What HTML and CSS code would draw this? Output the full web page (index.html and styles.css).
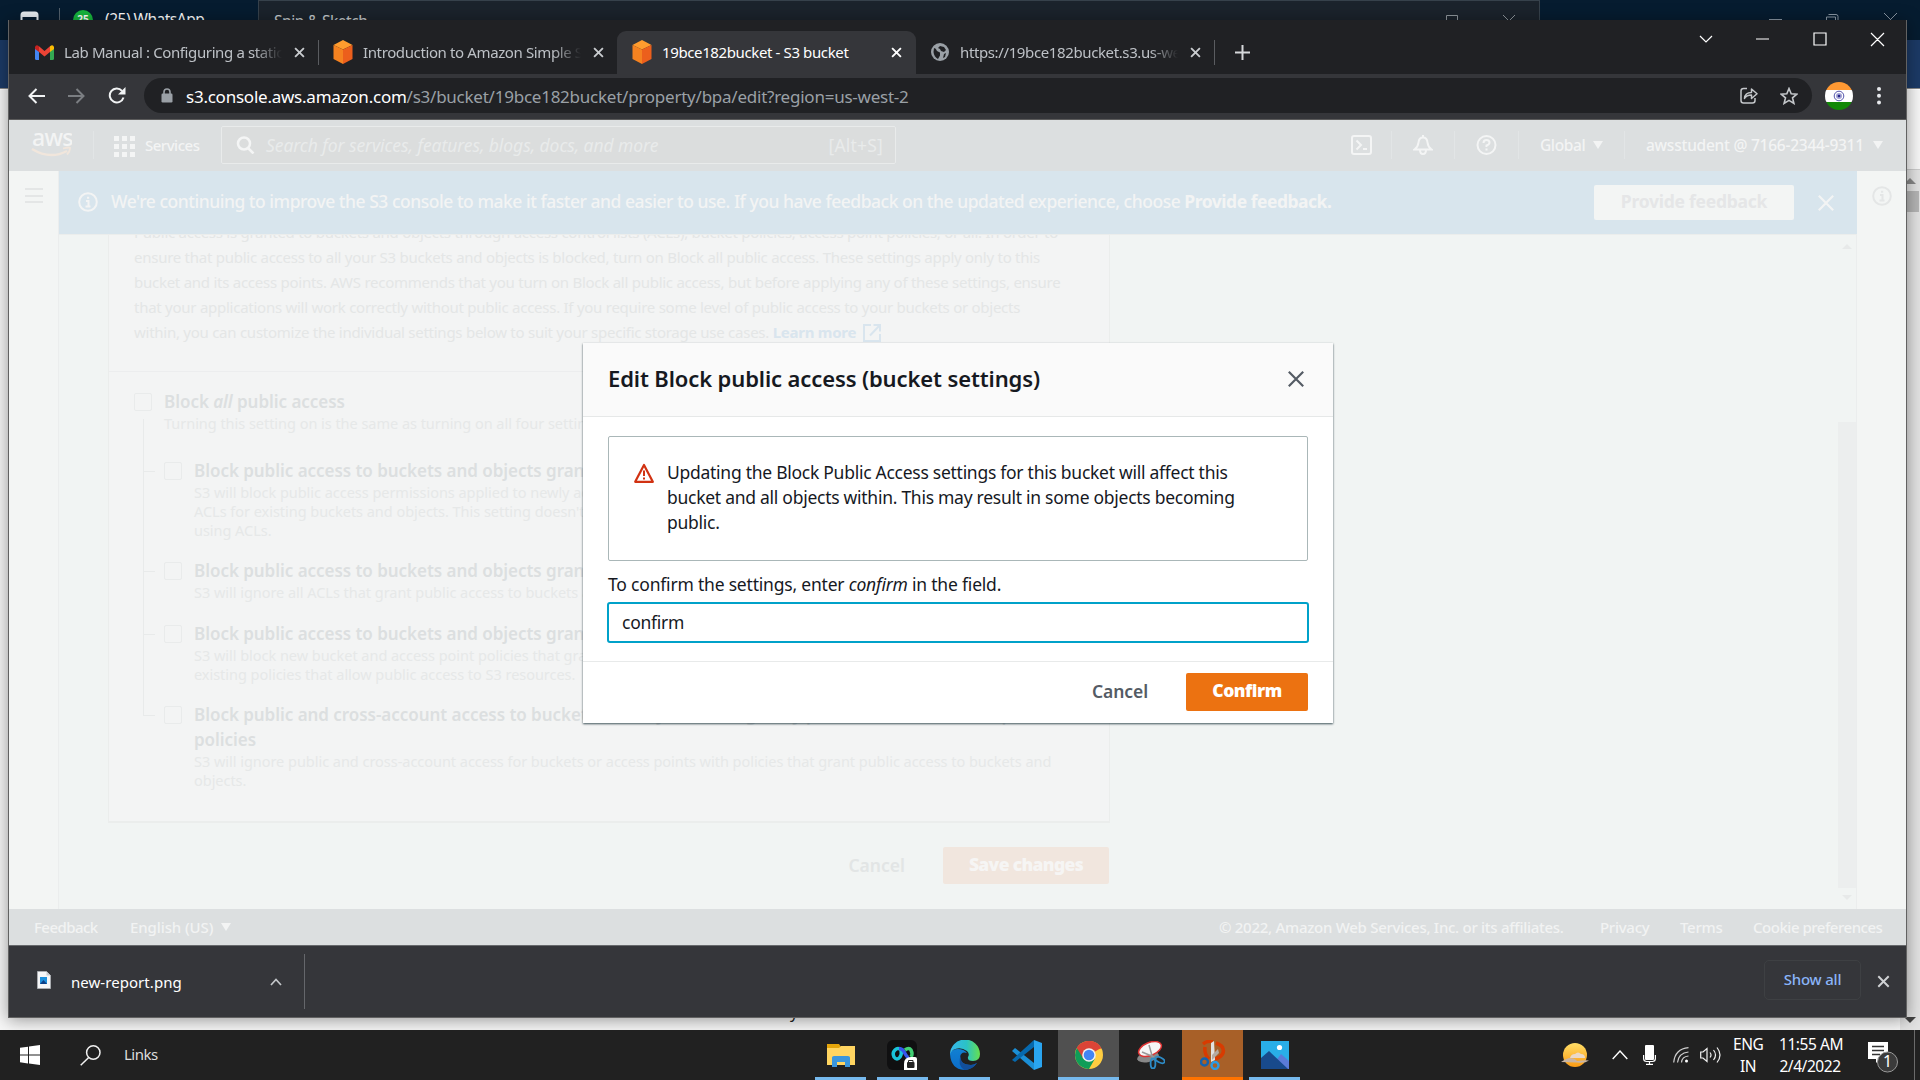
FILE: index.html
```html
<!DOCTYPE html>
<html lang="en">
<head>
<meta charset="utf-8">
<title>19bce182bucket - S3 bucket</title>
<link rel="stylesheet" href="styles.css">
</head>
<body>
<svg width="0" height="0" class="defs">
  <symbol id="x" viewBox="0 0 10 10"><path d="M1 1 9 9M9 1 1 9" fill="none" stroke="currentColor"/></symbol>
  <symbol id="cube" viewBox="0 0 20 24"><path d="M10 0 19.500 5 10 9.500.5 5z" fill="#ff9c2e"/><path d="M.5 5 10 9.500V24L.5 19z" fill="#f58220"/><path d="M19.500 5 10 9.500V24l9.500-5z" fill="#ec5f1c"/></symbol>
  <symbol id="info" viewBox="0 0 20 20"><circle cx="10" cy="10" r="8.800" fill="none" stroke="currentColor" stroke-width="2"/><path d="M8 9h2.500v5M7.500 14.500h5M9 5.800h2.200" fill="none" stroke="currentColor" stroke-width="2"/></symbol>
</svg>

<div class="desktop">
  <div class="edge-window">
    <div class="edge-tabs">
      <svg class="edge-pane" width="19" height="16" viewBox="0 0 19 16"><path d="M1.500 16V4q0-2.500 2.500-2.500h11q2.500 0 2.500 2.500v12" fill="none" stroke="#e8edf2" stroke-width="2"/><path d="M2 2h15v4H2z" fill="#e8edf2"/></svg>
      <i class="edge-sep"></i>
      <span class="wa-badge">25</span>
      <span class="edge-title">(25) WhatsApp</span>
      <svg class="edge-controls" width="130" height="20" viewBox="0 0 130 20" fill="none" stroke="#8b98a5"><path d="M0 19.500h13M57.500 20v-3h9v3M59.500 14.500h7.500q2 0 2 2v4M115 13l13 13M128 13l-13 13"/></svg>
    </div>
    <div class="edge-bar"></div>
    <div class="edge-page"><span class="edge-letter">y</span><div class="edge-scroll"><i class="up"></i><i class="thumb"></i><i class="down"></i></div></div>
  </div>
  <div class="sketch-window"><span>Snip &amp; Sketch</span><svg width="71" height="20" viewBox="0 0 71 20" fill="none" stroke="#8e959b"><path d="M.5 14.500h11V27H.5zM57 14l12 12M69 14 57 26"/></svg></div>

  <main class="chrome">
    <header class="tabs">
      <div class="tab first">
        <svg class="fav" width="19" height="15" viewBox="0 0 19 15"><path d="M0 2v11.500Q0 15 1.500 15H4V5z" fill="#4285f4"/><path d="M19 2v11.500q0 1.500-1.500 1.500H15V5z" fill="#34a853"/><path d="M4 1.200 9.500 6 15 1.200V7l-5.500 4.500L4 7z" fill="#ea4335"/><path d="M0 2Q1-1 4 1.200V7L0 4z" fill="#c5221f"/><path d="M19 2q-1-3-4-.8V7l4-3z" fill="#fbbc04"/></svg>
        <span class="tab-title">Lab Manual : Configuring a static</span><svg class="tab-x"><use href="#x"/></svg>
      </div>
      <div class="tab second">
        <svg class="fav" width="20" height="24"><use href="#cube"/></svg>
        <span class="tab-title">Introduction to Amazon Simple S</span><svg class="tab-x"><use href="#x"/></svg>
      </div>
      <div class="tab active">
        <svg class="fav" width="20" height="24"><use href="#cube"/></svg>
        <span class="tab-title plain">19bce182bucket - S3 bucket</span><svg class="tab-x"><use href="#x"/></svg>
      </div>
      <div class="tab fourth">
        <svg class="fav" width="18" height="18" viewBox="0 0 18 18"><circle cx="9" cy="9" r="9" fill="#9aa0a6"/><path d="M3 5q2 0 3 3l3 1.500v3L7 16Q3 14 2.500 9zM9 3l4 1 2 3-2 2-3-1-1-2-2-1zM13 11l2-1-1 4-2 1z" fill="#202124"/></svg>
        <span class="tab-title">https://19bce182bucket.s3.us-we</span><svg class="tab-x"><use href="#x"/></svg>
      </div>
      <svg class="new-tab" width="15" height="15" viewBox="0 0 15 15"><path d="M7.500 0v15M0 7.500h15" stroke="#d5d7da" stroke-width="2"/></svg>
      <svg class="win-controls" width="187" height="15" viewBox="0 0 187 15" fill="none" stroke="#fff" stroke-width="1.200"><path d="m1 4 6 6 6-6M57 7h13M115 1h12v12h-12zM172 1l13 13M185 1l-13 13"/></svg>
    </header>

    <div class="toolbar">
      <svg class="back" width="18" height="16" viewBox="0 0 18 16" fill="none" stroke="#f1f3f4" stroke-width="2"><path d="M17 8H2M8.500 1 1.500 8l7 7"/></svg>
      <svg class="fwd" width="18" height="16" viewBox="0 0 18 16" fill="none" stroke="#7b7e82" stroke-width="2"><path d="M1 8h15M9.500 1l7 7-7 7"/></svg>
      <svg class="reload" width="18" height="17" viewBox="0 0 18 17"><path d="M15.500 10.500A7 7 0 1 1 14 3.800" fill="none" stroke="#f1f3f4" stroke-width="2"/><path d="M17.500 0v7.500H10z" fill="#f1f3f4"/></svg>
      <div class="omnibox">
        <svg class="lock" width="12" height="15" viewBox="0 0 12 15"><path d="M3 6V4a3 3 0 0 1 6 0v2" fill="none" stroke="#9aa0a6" stroke-width="1.600"/><rect y="5.500" x=".5" width="11" height="9" rx="1.200" fill="#9aa0a6"/></svg>
        <span class="url"><b>s3.console.aws.amazon.com</b>/s3/bucket/19bce182bucket/property/bpa/edit?region=us-west-2</span>
        <svg class="share" width="18" height="17" viewBox="0 0 18 17" fill="none" stroke="#c4c7ca" stroke-width="1.500"><path d="M7 1.500H3.500Q1 1.500 1 4v9.500Q1 16 3.500 16h9q2.500 0 2.500-2.500V11"/><path d="M4.500 11.500q.5-6 7-6V2l5.500 4.800-5.500 4.700V8q-5 0-7 3.500z" stroke-linejoin="round"/></svg>
        <svg class="star" width="18" height="18" viewBox="0 0 18 18"><path d="m9 1.500 2.200 5.200 5.600.5-4.300 3.600 1.400 5.600L9 13.400l-4.900 3 1.400-5.600L1.200 7.200l5.600-.5z" fill="none" stroke="#c4c7ca" stroke-width="1.600"/></svg>
      </div>
      <svg class="avatar" width="28" height="28" viewBox="0 0 28 28"><clipPath id="av"><circle cx="14" cy="14" r="14"/></clipPath><g clip-path="url(#av)"><path d="M0 0h28v8H0z" fill="#ff9933"/><path d="M0 8h28v12H0z" fill="#fff"/><path d="M0 20h28v8H0z" fill="#128807"/></g><circle cx="14" cy="14" r="4.800" fill="none" stroke="#5757ad"/><circle cx="14" cy="14" r="3" fill="#a3a3d5"/><circle cx="14" cy="14" r="1.300" fill="#26268a"/></svg>
      <svg class="kebab" width="4" height="18" viewBox="0 0 4 18" fill="#e8eaed"><circle cx="2" cy="2" r="2"/><circle cx="2" cy="8.700" r="2"/><circle cx="2" cy="15.500" r="2"/></svg>
    </div>

    <section class="console">
      <div class="aws-nav">
        <svg class="aws-logo" width="41" height="27" viewBox="0 0 41 27"><text x="1" y="14" class="aws-word">aws</text><path d="M1 17q18 11 35 2" fill="none" stroke="#f1e6dc" stroke-width="2.400"/><path d="M32 16.500q8-2 7 0 0 3-3 6" fill="none" stroke="#f1e6dc" stroke-width="1.800"/></svg>
        <i class="rule logo-rule"></i>
        <svg class="grid-ico" width="21" height="21" viewBox="0 0 21 21" fill="#f4f5f5"><path d="M0 0h5v5H0zM8 0h5v5H8zM16 0h5v5h-5zM0 8h5v5H0zM8 8h5v5H8zM16 8h5v5h-5zM0 16h5v5H0zM8 16h5v5H8zM16 16h5v5h-5z"/></svg>
        <span class="services">Services</span>
        <div class="nav-search"><svg width="19" height="18" viewBox="0 0 19 18" fill="none" stroke="#f4f5f5" stroke-width="2.500"><circle cx="8" cy="7.500" r="6"/><path d="m12 12 5.500 5.500"/></svg><em>Search for services, features, blogs, docs, and more</em><span>[Alt+S]</span></div>
        <div class="nav-right">
          <svg class="shell" width="21" height="20" viewBox="0 0 21 20" fill="none" stroke="#f4f5f5" stroke-width="2"><rect x="1" y="1" width="19" height="18" rx="2"/><path d="m5.500 5.500 4.500 4.500-4.500 4.500M12 14h4"/></svg>
          <i class="rule"></i>
          <svg class="bell" width="20" height="20" viewBox="0 0 20 20" fill="none" stroke="#f4f5f5" stroke-width="2"><path d="M10 0v2M1.500 14.500q3.500-2.500 4-7Q6 2.500 10 2.500t4.500 5q.5 4.500 4 7zM7 15q0 4 3 4t3-4"/></svg>
          <i class="rule"></i>
          <svg class="help" width="21" height="20" viewBox="0 0 21 20" fill="none" stroke="#f4f5f5" stroke-width="2"><circle cx="10.500" cy="10" r="9"/><path d="M7.500 8q0-3 3-3t3 2.500q0 2-3 3v1.500M10.500 13.500v2"/></svg>
          <i class="rule"></i>
          <span class="region">Global</span><i class="tri"></i>
          <i class="rule"></i>
          <span class="account">awsstudent @ 7166-2344-9311</span><i class="tri"></i>
        </div>
      </div>

      <div class="workspace">
        <aside class="side"><i></i><i></i><i></i></aside>
        <div class="content">
          <div class="banner">
            <svg class="ban-info" width="20" height="20"><use href="#info"/></svg>
            <span class="ban-text">We're continuing to improve the S3 console to make it faster and easier to use. If you have feedback on the updated experience, choose <b>Provide feedback.</b></span>
            <span class="ban-btn">Provide feedback</span>
            <svg class="ban-x"><use href="#x"/></svg>
          </div>
          <div class="scroller">
            <div class="column">
              <div class="card">
                <div class="intro">
                  <p>Public access is granted to buckets and objects through access control lists (ACLs), bucket policies, access point policies, or all. In order to</p>
                  <p>ensure that public access to all your S3 buckets and objects is blocked, turn on Block all public access. These settings apply only to this</p>
                  <p>bucket and its access points. AWS recommends that you turn on Block all public access, but before applying any of these settings, ensure</p>
                  <p>that your applications will work correctly without public access. If you require some level of public access to your buckets or objects</p>
                  <p>within, you can customize the individual settings below to suit your specific storage use cases. <b>Learn more</b><svg width="18" height="18" viewBox="0 0 18 18" fill="none" stroke="#d9e5ee" stroke-width="2"><path d="M8 1H1v16h16v-7M10.500 1H17v6.500M17 1 7 11.500"/></svg></p>
                </div>
                <div class="options">
                  <div class="opt root"><i class="box"></i><div><h3>Block <em>all</em> public access</h3><p>Turning this setting on is the same as turning on all four settings below.</p></div></div>
                  <div class="tree">
                    <div class="opt o1"><i class="branch"></i><i class="box"></i><div><h3>Block public access to buckets and objects granted through new access control lists (ACLs)</h3><p>S3 will block public access permissions applied to newly added buckets or objects, and prevent the creation of new<br>ACLs for existing buckets and objects. This setting doesn't change any existing permissions that allow public access<br>using ACLs.</p></div></div>
                    <div class="opt o2"><i class="branch"></i><i class="box"></i><div><h3>Block public access to buckets and objects granted through any access control lists (ACLs)</h3><p>S3 will ignore all ACLs that grant public access to buckets and objects.</p></div></div>
                    <div class="opt o3"><i class="branch"></i><i class="box"></i><div><h3>Block public access to buckets and objects granted through new public bucket policies</h3><p>S3 will block new bucket and access point policies that grant public access to buckets and objects.<br>existing policies that allow public access to S3 resources.</p></div></div>
                    <div class="opt o4"><i class="branch"></i><i class="box"></i><div><h3>Block public and cross-account access to buckets and objects through any public bucket or access point<br>policies</h3><p>S3 will ignore public and cross-account access for buckets or access points with policies that grant public access to buckets and<br>objects.</p></div></div>
                  </div>
                </div>
              </div>
              <div class="form-actions"><span>Cancel</span><b>Save changes</b></div>
            </div>
            <div class="inner-scroll"><i class="up"></i><i class="thumb"></i><i class="down"></i></div>
          </div>
        </div>
        <aside class="help-panel"><svg width="20" height="20"><use href="#info"/></svg></aside>
      </div>

      <footer class="aws-footer">
        <span class="f-feedback">Feedback</span><span class="f-lang">English (US)</span><i class="tri"></i>
        <span class="f-copy">© 2022, Amazon Web Services, Inc. or its affiliates.</span><span class="f-priv">Privacy</span><span class="f-terms">Terms</span><span class="f-cookie">Cookie preferences</span>
      </footer>

      <div class="modal">
        <div class="modal-head"><h2>Edit Block public access (bucket settings)</h2><svg class="modal-x"><use href="#x"/></svg></div>
        <div class="modal-body">
          <div class="alert">
            <svg width="20" height="20" viewBox="0 0 20 20"><path d="M10 2 18.800 18.800H1.200z" fill="none" stroke="#d13212" stroke-width="2.200" stroke-linejoin="round"/><path d="M10 7.500v5.500M10 14.500v2" stroke="#d13212" stroke-width="2"/></svg>
            <p>Updating the Block Public Access settings for this bucket will affect this<br>bucket and all objects within. This may result in some objects becoming<br>public.</p>
          </div>
          <label>To confirm the settings, enter <em>confirm</em> in the field.</label>
          <div class="field">confirm</div>
        </div>
        <div class="modal-foot"><span>Cancel</span><b>Confirm</b></div>
      </div>
    </section>

    <div class="downloads">
      <svg class="dl-file" width="14" height="18" viewBox="0 0 14 18"><path d="M.5.5h9l4 4v13H.5z" fill="#f5f6f7" stroke="#a9acb0"/><path d="M9.500.5v4h4" fill="#c9ccd0"/><path d="M3 6h7v7H3z" fill="#1e90dc"/><path d="m3 13 3.500-4 3.500 4z" fill="#0d3f87"/></svg>
      <span class="dl-name">new-report.png</span>
      <svg class="dl-caret" width="12" height="8" viewBox="0 0 12 8"><path d="m1 7 5-5.500L11 7" fill="none" stroke="#c4c7ca" stroke-width="1.700"/></svg>
      <i class="dl-rule"></i>
      <span class="dl-all">Show all</span>
      <svg class="dl-x"><use href="#x"/></svg>
    </div>
  </main>

  <nav class="taskbar">
    <svg class="start" width="20" height="20" viewBox="0 0 20 20" fill="#fff"><path d="M0 2.800 8 1.700v7.800H0zM9 1.500 20 0v9.500H9zM0 10.500h8v7.900l-8-1.100zM9 10.500h11V20L9 18.500z"/></svg>
    <svg class="find" width="21" height="21" viewBox="0 0 21 21" fill="none" stroke="#f2f2f2" stroke-width="1.500"><circle cx="13.300" cy="7.500" r="6.700"/><path d="M8.700 12.500.7 20.300"/></svg>
    <span class="links">Links</span>
    <div class="apps">
      <div class="app open"><svg width="28" height="24" viewBox="0 0 28 24"><path d="M0 1h12l2 3v4H0z" fill="#e5a50a"/><path d="M0 5h12l2-2h14v19H0z" fill="#ffd561"/><path d="M5 24V14.500Q5 13 7 13h14q2 0 2 1.500V24h-5v-5h-8v5z" fill="#3a96dd"/></svg></div>
      <div class="app open"><svg width="31" height="31" viewBox="0 0 31 31"><rect width="30" height="30" rx="6" fill="#101011"/><g fill="none" stroke-width="3.500"><path d="M14 10q-3-3-6 0-3 3-1 7 3 4 6 0 2-3 1-7" stroke="#19c4d9"/><path d="M12 8.500q4 0 6 5 2 4 4 3" stroke="#3656ed"/><path d="M18 10q4-3 6 0 2 4 0 7" stroke="#42cf75"/></g><path d="M17 24q0-7 7-7h4q2 0 2 2v11H17z" fill="#fff"/><rect x="20" y="22" width="7.500" height="6" rx="1" fill="#222"/><path d="M21.500 22v-1.500h4.500V22" fill="none" stroke="#222"/></svg></div>
      <div class="app open"><svg width="30" height="30" viewBox="0 0 30 30"><defs><linearGradient id="e1"><stop stop-color="#36b7ee"/><stop offset=".55" stop-color="#2bc2c5"/><stop offset="1" stop-color="#66e04e"/></linearGradient><linearGradient id="e2" x2="0" y2="1"><stop stop-color="#1180d2"/><stop offset="1" stop-color="#0b6cc9"/></linearGradient></defs><path d="M0 15A15 15 0 0 1 30 14q0 7-7 7-6 0-5-4 2-3-1-6-7-5-14-1z" fill="url(#e1)"/><path d="M0 14q2-5 8-5 6 0 9 4-6-2-7 4 0 8 11 8 3 0 6-2-5 7-13 7Q1 29 0 14z" fill="url(#e2)"/><path d="M11 14q-2 11 10 11 3 0 6-2-5 7-13 7-7-5-3-16z" fill="#124f9c"/></svg></div>
      <div class="app code"><svg width="30" height="30" viewBox="0 0 30 30"><path d="M0 11 3 8l19 15v7z" fill="#1b8fd6"/><path d="m0 20 3 2L22 7V0z" fill="#0669ae"/><path d="m22 0 8 3v24l-8 3z" fill="#2aa5f0"/></svg></div>
      <div class="app current"><svg width="28" height="28" viewBox="0 0 28 28"><circle cx="14" cy="14" r="14" fill="#ffcd41"/><path d="M14 14 1.900 7A14 14 0 0 1 26.100 7z" fill="#db4437"/><path d="M14 14 1.900 7A14 14 0 0 0 14 28l6-10.500z" fill="#0f9d58"/><path d="M14 7.500h12.400Q22-1 12 .2 4 2 1.900 7l6 10z" fill="#db4437"/><circle cx="14" cy="14" r="6.800" fill="#f1f1f1"/><circle cx="14" cy="14" r="5.300" fill="#4285f4"/></svg></div>
      <div class="app sketch"><svg width="28" height="28" viewBox="0 0 28 28"><ellipse cx="11" cy="16" rx="11" ry="5" transform="rotate(-12 11 16)" fill="#888"/><ellipse cx="13" cy="8" rx="12" ry="6.500" transform="rotate(-22 13 8)" fill="#f6f6f6" stroke="#d33" stroke-width="1.500"/><path d="m12 4 4 14M5 11l12 5" stroke="#999" stroke-width="1.500"/><g fill="none" stroke="#2d8cc7" stroke-width="1.800"><ellipse cx="16" cy="22.500" rx="2.400" ry="5"/><ellipse cx="23" cy="19" rx="5" ry="2.500" transform="rotate(25 23 19)"/></g></svg></div>
      <div class="app snip"><svg width="26" height="30" viewBox="0 0 26 30"><path d="M3 4q5-4 10-2M16 3q9 3 7 10-2 5-9 6M5 7q-1 7 4 12" fill="none" stroke="#d83b01" stroke-width="3.500"/><path d="m11 3 3-2 1 19-4 2z" fill="#e2e2e2"/><path d="m12 15 6-6 1 4-7 7z" fill="#b5aaa2"/><circle cx="4.500" cy="22" r="3.500" fill="none" stroke="#1462ad" stroke-width="2.400"/><circle cx="15" cy="25.500" r="3.500" fill="none" stroke="#2a9be4" stroke-width="2.400"/></svg></div>
      <div class="app open"><svg width="28" height="28" viewBox="0 0 28 28"><path d="M0 0h28v28H0z" fill="#29aee8"/><path d="m14 21 6-8 8 7v8H14z" fill="#5b7bd8"/><path d="M0 17 8 10l19 18H0z" fill="#184a8c"/><circle cx="18.500" cy="6.500" r="2.600" fill="#fff"/></svg></div>
    </div>
    <div class="tray">
      <svg class="weather" width="29" height="24" viewBox="0 0 29 24"><defs><linearGradient id="sun" x2="0" y2="1"><stop stop-color="#ffdd67"/><stop offset="1" stop-color="#fb9b13"/></linearGradient></defs><circle cx="15" cy="12" r="12" fill="url(#sun)"/><path d="M10 15q1-4 5-4 3-3 6 0 4 0 4 4z" fill="#ead8c8"/><path d="M1 19q4-3 8-4 6 0 8 3 8-1 12-.5-4 3-12 2z" fill="#c9b5a4"/></svg>
      <svg class="chev" width="16" height="10" viewBox="0 0 16 10"><path d="m.7 9 7.300-8 7.300 8" fill="none" stroke="#fff" stroke-width="1.400"/></svg>
      <svg class="mic" width="13" height="20" viewBox="0 0 13 20"><rect x="2" width="9" height="15" rx="1" fill="#fff"/><path d="M.6 10v3.500q0 3 3 3h5.800q3 0 3-3V10M6.500 16.500v3M3 19.300h7" fill="none" stroke="#fff" stroke-width="1.200"/></svg>
      <svg class="wifi" width="16" height="16" viewBox="0 0 16 16" fill="none" stroke="#d0d0d0" stroke-width="1.200"><path d="M.7 15.500Q2 2 15.500.7M4.500 15.500q1-9.500 11-10.500M8.500 15.500q.5-6 7-6.500"/><circle cx="13.500" cy="14" r="1.500" fill="#fff" stroke="none"/></svg>
      <svg class="vol" width="21" height="18" viewBox="0 0 21 18" fill="none" stroke="#f2f2f2" stroke-width="1.200"><path d="M.7 6H3l4-3.500v13L3 12H.7zM10 6.500q2 2.500 0 5M13.500 4q4 5 0 10M17 1.500q6 7.500 0 15"/></svg>
      <div class="lang">ENG<br>IN</div>
      <div class="clock">11:55 AM<br>2/4/2022</div>
      <svg class="notes" width="30" height="31" viewBox="0 0 30 31"><path d="M0 0h20v17h-8l-4 4v-4H0z" fill="#fff"/><path d="M4 4.500h12M4 8.500h12M4 12.500h8" stroke="#333" stroke-width="1.400"/><circle cx="19.500" cy="20" r="10" fill="#3b3b3b" stroke="#999"/><text x="19.500" y="25" class="count">1</text></svg>
    </div>
  </nav>
</div>
</body>
</html>
```
FILE: styles.css
```css
* { box-sizing: border-box; }
body { margin: 0; overflow: hidden; }
.defs { position: absolute; }
.desktop { position: relative; width: 1920px; height: 1080px; overflow: hidden; background: #212121; color: #fff; font: 15px "Noto Sans", "Open Sans", sans-serif; font-stretch: 85%; }
svg { display: block; flex: none; }
i { display: block; flex: none; }
p, h2, h3 { margin: 0; }
span, p, h2, h3 { white-space: nowrap; }

/* windows behind the browser */
.edge-window { position: absolute; inset: 0 0 50px; display: flex; flex-direction: column; background: #f7f7f7; }
.edge-tabs { display: flex; height: 40px; background: #061c30; align-items: flex-start; padding-left: 20px; }
.edge-pane { margin-top: 11px; }
.edge-sep { width: 1px; height: 30px; margin: 8px 14px 0 20px; background: #53606c; }
.wa-badge { width: 20px; height: 20px; margin: 10px 12px 0 -1px; border-radius: 50%; background: #17b63d; font-size: 10px; font-weight: 700; line-height: 19px; text-align: center; }
.edge-title { margin-top: 8px; line-height: 22px; font-size: 15.500px; letter-spacing: -.5px; }
.edge-controls { margin-left: auto; margin-right: 21px; }
.edge-bar { height: 49px; background: #1c3a66; border-bottom: 1px solid #8a8a8a; }
.edge-page { flex: 1; display: flex; justify-content: space-between; align-items: flex-end; border-top: 1px solid #fff; }
.edge-letter { margin: 0 0 7px 790px; color: #222; line-height: 22px; font-size: 16px; }
.edge-scroll { width: 20px; align-self: stretch; margin-top: 79px; background: #e3e3e3; border-top: 1px solid #ccc; display: flex; flex-direction: column; align-items: center; }
.up { border: 6px solid transparent; border-top: 0; border-bottom: 6px solid #888; }
.down { border: 6px solid transparent; border-bottom: 0; border-top: 6px solid #444; }
.edge-scroll .up { margin-top: 8px; }
.edge-scroll .thumb { width: 17px; height: 21px; margin-top: 7px; background: #b5b5b5; }
.edge-scroll .down { margin-top: auto; margin-bottom: 7px; }
.sketch-window { position: absolute; left: 258px; top: 0; width: 1282px; height: 22px; display: flex; justify-content: space-between; padding: 0 22px 0 15px; background: #1b232c; border: solid #36414b; border-width: 1px 1px 0; }
.sketch-window span { line-height: 40px; color: #c5c9cd; font-size: 15.500px; letter-spacing: -.45px; }

/* browser frame */
.chrome { position: absolute; left: 8px; top: 20px; width: 1899px; height: 998px; display: flex; flex-direction: column; border: solid #626262; border-width: 0 1px 1px; background: #35363a; box-shadow: 0 2px 16px rgba(0,0,0,.4); }
.tabs { display: flex; height: 54px; background: #202124; color: #bdc1c6; letter-spacing: -.38px; }
.tab { display: flex; align-items: center; height: 43px; margin-top: 11px; padding-bottom: 1px; }
.fav { margin-right: 10px; }
.tab-title { width: 218px; overflow: hidden; line-height: 24px; -webkit-mask: linear-gradient(90deg, #000 190px, transparent); mask: linear-gradient(90deg, #000 190px, transparent); }
.tab-title.plain { -webkit-mask: none; mask: none; width: 217px; color: #fff; }
.tab-x { width: 11px; height: 11px; margin-left: 12px; color: #c9cccf; stroke-width: 1.700; }
.first { width: 300px; padding-left: 26px; }
.second { width: 308px; padding-left: 14px; }
.second::before { content: ""; width: 1px; height: 25px; background: #5a5c60; margin: 0 14px 0 -5px; }
.active { width: 299px; padding-left: 15px; border-radius: 9px 9px 0 0; background: #35363a; }
.active .tab-x { color: #fff; }
.fourth { width: 299px; padding-left: 15px; }
.fourth .tab-title { margin-left: 1px; }
.fourth::after { content: ""; width: 1px; height: 25px; background: #5a5c60; margin-left: 13px; }
.new-tab { margin: 25px 0 0 20px; }
.win-controls { margin: 12px 20px 0 auto; }
.toolbar { display: flex; align-items: center; height: 46px; padding: 0 21px 2px 19px; border-bottom: 1px solid #5b5b5b; }
.fwd { margin-left: 21px; }
.reload { margin-left: 23px; }
.omnibox { display: flex; align-items: center; width: 1668px; height: 35px; margin-left: 18px; padding: 0 14px 0 17px; border-radius: 18px; background: #202124; }
.url { margin-left: 13px; color: #9aa0a6; font-size: 17px; line-height: 30px; letter-spacing: -.24px; padding-top: 2px; }
.url b { font-weight: 400; color: #fff; }
.share { margin-left: auto; margin-right: 22px; }
.avatar { margin-left: 13px; }
.kebab { margin-left: 24px; }

/* console page seen through the modal veil */
.console { position: relative; height: 825px; background: #f1f4f3; color: #e4e6e6; display: flex; flex-direction: column; }
.aws-nav { display: flex; align-items: center; height: 51px; background: #dcdfe0; color: #f3f4f4; font-size: 15.500px; font-weight: 500; padding-bottom: 1px; }
.aws-logo { margin-left: 22px; }
.aws-word { font-size: 23px; fill: #f3f4f4; letter-spacing: -.7px; }
.rule { width: 1px; height: 28px; background: #e2e5e6; }
.logo-rule { margin-left: 21px; }
.grid-ico { margin-left: 20px; margin-top: 2px; }
.services { margin-left: 10px; width: 57px; font-size: 15px; letter-spacing: -.5px; }
.nav-search { display: flex; align-items: center; width: 675px; height: 38px; margin-left: 19px; padding: 0 12px 0 14px; border: 1px solid #e9ebeb; border-radius: 2px; background: #dbdddd; color: #e9ebeb; font-size: 17.500px; font-weight: 400; letter-spacing: -.07px; }
.nav-search em { margin-left: 11px; }
.nav-search span { margin-left: auto; letter-spacing: .2px; }
.nav-right { display: flex; align-items: center; margin-left: auto; padding-right: 23px; }
.nav-right .rule { margin: 0 21px; }
.nav-right .shell + .rule { margin-left: 19px; }
.region { width: 45px; letter-spacing: -.4px; }
.account { width: 219px; letter-spacing: -.25px; }
.tri { width: 10px; height: 8px; background: #f3f4f4; clip-path: polygon(0 0, 100% 0, 50% 100%); margin-left: 8px; }
.workspace { display: flex; height: 738px; }
.side { width: 50px; padding: 17px 16px; border-right: 1px solid #ebeded; background: #f3f5f4; }
.side i { width: 18px; height: 2px; background: #e4e6e6; margin-bottom: 4.500px; }
.content { width: 1798px; display: flex; flex-direction: column; }
.banner { display: flex; align-items: center; height: 63px; background: #d8e5ed; color: #f3f4f4; font-size: 17.500px; font-weight: 500; letter-spacing: -.48px; padding: 0 0 1px 19px; }
.ban-text { margin: 0 0 2px 13px; }
.ban-btn { margin-left: auto; width: 200px; height: 35px; background: #f3f5f4; color: #e5e6e7; font-weight: 700; letter-spacing: -.25px; text-align: center; line-height: 33px; border-radius: 2px; }
.ban-x { width: 18px; height: 18px; margin: 2px 22px 0 23px; stroke-width: 1.200; }
.scroller { display: flex; height: 675px; justify-content: space-between; overflow: hidden; border-top: 1px solid #ebedec; }
.column { width: 1002px; margin-left: 49px; }
.card { width: 1002px; height: 588px; border: 1px solid #ebedec; border-top: 0; border-bottom-width: 2px; background: #f3f4f4; }
.intro { display: flow-root; height: 137px; border-bottom: 1px solid #ecedee; padding: 0 25px; font-size: 15px; line-height: 25px; letter-spacing: -.26px; }
.intro p:first-child { margin-top: -15px; }
.intro p { height: 25px; display: flex; align-items: center; white-space: pre; }
.intro b { color: #d9e5ee; }
.intro svg { margin-left: 7px; }
.opt { display: flex; position: relative; }
.box { width: 18px; height: 18px; border: 1px solid #e9ebeb; border-radius: 2px; margin: 4px 12px 0 0; }
.opt h3 { font-size: 17px; line-height: 25px; font-weight: 600; color: #dcdfe0; letter-spacing: -.04px; }
.opt p { font-size: 14.500px; line-height: 18.750px; color: #e6e8e8; letter-spacing: -.03px; }
.options { padding: 17px 0 0 25px; }
.root { height: 69px; width: 960px; overflow: hidden; }
.tree { margin-left: 9px; }
.branch { width: 12px; height: 1px; background: #e8eaea; margin: 13px 9px 0 0; }
.tree .opt::before { content: ""; position: absolute; left: 0; top: 0; bottom: 0; width: 1px; background: #e8eaea; }
.tree .o1::before { top: -39px; }
.tree .o4::before { bottom: auto; height: 14px; }
.o1 { height: 100px; }
.o2 { height: 63px; }
.o3 { height: 81px; }
.form-actions { display: flex; height: 37px; margin-top: 24px; padding-right: 1px; justify-content: flex-end; align-items: center; font-size: 17.500px; font-weight: 600; color: #e2e5e5; }
.form-actions span { margin-bottom: 2px; }
.form-actions b { width: 166px; height: 37px; margin-left: 38px; line-height: 35px; text-align: center; border-radius: 2px; background: #f1e6de; color: #f6f5f4; letter-spacing: -.65px; }
.inner-scroll { width: 20px; display: flex; flex-direction: column; align-items: center; border-right: 1px solid #ebeded; }
.inner-scroll .up { margin-top: 9px; border-bottom-color: #e7e9e9; border-width: 0 5px 5px; }
.inner-scroll .thumb { width: 18px; height: 466px; margin-top: 173px; background: #eceeee; }
.inner-scroll .down { margin-top: 7px; border-top-color: #e7e9e9; border-width: 5px 5px 0; }
.help-panel { width: 49px; padding: 15px 0 0 15px; background: #f3f5f4; }
.aws-footer { display: flex; align-items: center; height: 36px; padding: 0 24px 0 25px; background: #dcdfe0; color: #f2f3f3; font-size: 15px; font-weight: 500; letter-spacing: -.28px; }
.f-feedback { width: 64px; letter-spacing: -.55px; }
.f-lang { margin-left: 32px; width: 83px; letter-spacing: -.1px; }
.f-copy { margin-left: auto; width: 344px; }
.f-priv { margin-left: 37px; width: 49px; }
.f-terms { margin-left: 31px; width: 41px; }
.f-cookie { margin-left: 32px; width: 129px; letter-spacing: -.48px; }

/* confirmation modal */
.modal { position: absolute; left: 574px; top: 223px; width: 750px; height: 380px; background: #fff; color: #16191f; font-size: 17.500px; line-height: 25px; letter-spacing: -.27px; box-shadow: 0 1px 2px rgba(0,28,36,.75); }
.modal-head { display: flex; align-items: center; justify-content: space-between; height: 74px; padding: 0 28px 2px 25px; background: #fafafa; border-bottom: 1px solid #e6e8e8; }
.modal h2 { font-size: 22px; font-weight: 600; letter-spacing: -.12px; }
.modal-x { width: 18px; height: 18px; color: #545b64; stroke-width: 1.200; }
.modal-body { height: 245px; padding: 19px 25px 0; border-bottom: 1px solid #e8eaea; }
.alert { display: flex; height: 125px; border: 1px solid #aab7b8; border-radius: 2px; padding: 23px 25px; }
.alert svg { margin-top: 3px; }
.alert p { margin-left: 13px; }
.modal label { display: block; margin: 11px 0 5px; height: 25px; white-space: nowrap; letter-spacing: -.2px; }
.field { height: 41px; margin: 0 -1px; padding: 5px 13px; border: 2px solid #00a1c9; border-radius: 3px; line-height: 27px; }
.modal-foot { display: flex; justify-content: flex-end; align-items: center; height: 61px; padding: 0 25px 1px; font-weight: 600; color: #545b64; letter-spacing: -.1px; }
.modal-foot b { width: 122px; height: 38px; margin-left: 38px; border-radius: 2px; background: #ec7211; color: #fff; line-height: 35px; text-align: center; letter-spacing: -.5px; }
.modal-foot span { margin-bottom: 2px; }

/* download shelf */
.downloads { flex: 1; display: flex; align-items: center; border-top: 1px solid #67696c; }
.dl-file { margin: 0 0 4px 28px; }
.dl-name { margin-left: 20px; width: 112px; line-height: 24px; letter-spacing: .05px; }
.dl-caret { margin-left: 87px; }
.dl-rule { width: 1px; height: 55px; margin-left: 22px; background: #65676b; }
.dl-all { margin: 0 16px 4px auto; width: 97px; height: 40px; line-height: 37px; text-align: center; border: 1px solid #3e4043; border-radius: 5px; color: #8ab4f8; font-weight: 500; letter-spacing: -.2px; }
.dl-x { width: 13px; height: 13px; margin-right: 16px; color: #d0d2d4; stroke-width: 1.500; }

/* taskbar */
.taskbar { position: absolute; inset: auto 0 0; height: 50px; display: flex; align-items: center; background: #212121; }
.start { margin-left: 20px; }
.find { margin-left: 40px; }
.links { width: 34px; margin: 0 0 2px 23px; color: #ddd; letter-spacing: -.5px; }
.apps { display: flex; margin-left: 657px; height: 50px; }
.app { width: 51px; margin-right: 11px; display: flex; align-items: center; justify-content: center; border-bottom: 3px solid transparent; }
.app svg { margin-top: 3px; }
.open { border-color: #76b9ed; }
.code, .sketch { margin-right: 6px; }
.current { width: 61px; margin-right: 6px; background: #505050; border-color: #76b9ed; }
.snip { width: 61px; margin-right: 6px; background: #a86028; border-color: #ff7300; }
.tray { display: flex; align-items: center; margin-left: auto; height: 50px; margin-right: 5px; padding-right: 16px; border-right: 1px solid #6a6a6a; }
.chev { margin-left: 23px; }
.mic { margin-left: 15px; }
.wifi { margin-left: 17px; }
.vol { margin-left: 11px; }
.lang, .clock { text-align: center; line-height: 22.500px; font-size: 15.500px; white-space: nowrap; letter-spacing: -.45px; }
.lang { width: 30px; margin-left: 12px; }
.clock { width: 62px; margin-left: 16px; }
.notes { margin: 4px 0 0 27px; }
.count { font-size: 16px; fill: #fff; text-anchor: middle; }
```
